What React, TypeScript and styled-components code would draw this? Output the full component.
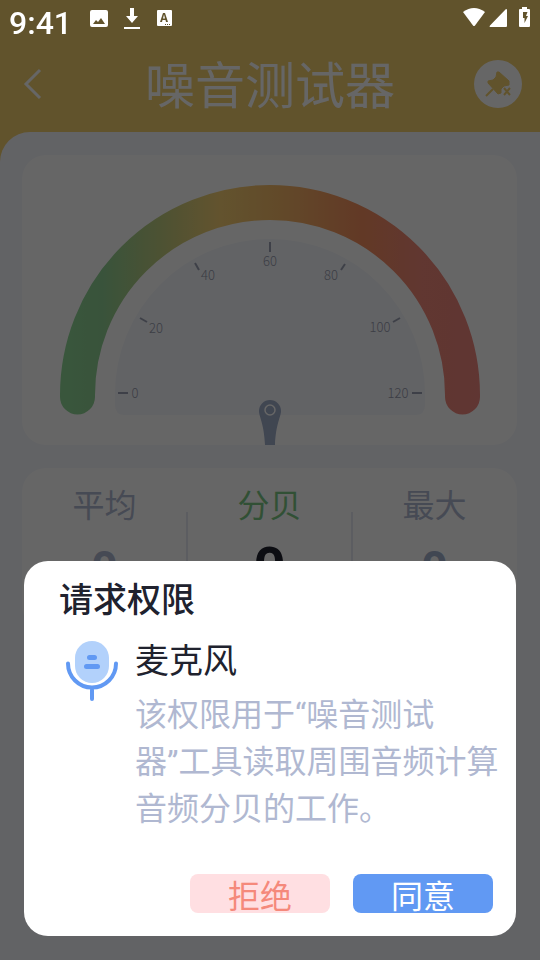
import React from "react";
import styled, { createGlobalStyle } from "styled-components";

const GlobalStyle = createGlobalStyle`
  *, *::before, *::after { box-sizing: border-box; }
  html, body, #root { height: 100%; }
  body {
    margin: 0;
    overflow: hidden;
    background: #f5f7fc;
    font-family: Roboto, "Noto Sans CJK SC", sans-serif;
  }
`;

const Screen = styled.div`
  display: flex;
  flex-direction: column;
  min-height: 100%;
  background: #f2cf6e;
`;

const StatusBar = styled.div`
  position: fixed;
  inset: 0 0 auto 0;
  z-index: 3;
  display: flex;
  align-items: flex-start;
  justify-content: space-between;
  height: 40px;
  padding: 6px 10px 0 9px;
  color: #fff;
`;

const StatusGroup = styled.div<{ $gap: number }>`
  display: flex;
  align-items: flex-start;
  gap: ${(p) => p.$gap}px;
`;

const Clock = styled.time`
  margin-right: 4px;
  font-size: 32px;
  font-weight: 500;
  line-height: 34px;
`;

const Header = styled.header`
  display: flex;
  align-items: center;
  justify-content: space-between;
  height: 132px;
  padding: 36px 18px 0;
  color: #fff;
`;

const IconButton = styled.button<{ $filled?: boolean }>`
  display: flex;
  align-items: center;
  justify-content: center;
  width: 48px;
  height: 48px;
  padding: 0;
  border: 0;
  border-radius: 50%;
  background: ${(p) => (p.$filled ? "#fff" : "transparent")};
  color: ${(p) => (p.$filled ? "#f2cf6e" : "#fff")};
`;

const BackButton = styled(IconButton)`
  justify-content: flex-start;
`;

const Title = styled.h1`
  margin: 0;
  padding-top: 6px;
  font-size: 50px;
  font-weight: 400;
  line-height: 60px;
`;

const Content = styled.main`
  display: flex;
  flex: 1;
  flex-direction: column;
  gap: 23px;
  padding: 23px 23px 0 22px;
  border-top-left-radius: 30px;
  background: #f5f7fc;
`;

const Card = styled.section`
  overflow: hidden;
  border-radius: 24px;
  background: #fff;
`;

const GaugeDrawing = styled.svg`
  display: block;
  width: 100%;
  font-family: "Noto Sans CJK SC", sans-serif;
  font-size: 13px;
  font-weight: 300;
`;

const StatsCard = styled(Card)`
  display: grid;
  grid-template-columns: repeat(3, 1fr);
  padding: 14px 0 24px;
`;

const Stat = styled.div`
  position: relative;
  display: flex;
  flex-direction: column;
  align-items: center;

  & + &::before {
    content: "";
    position: absolute;
    top: 30px;
    bottom: 0;
    left: -1px;
    width: 2px;
    background: #e6e9f2;
  }
`;

const StatLabel = styled.span<{ $color: string }>`
  font-size: 32px;
  line-height: 48px;
  color: ${(p) => p.$color};
`;

const StatValue = styled.strong<{ $color: string; $size: number }>`
  font-size: ${(p) => p.$size}px;
  font-weight: 700;
  line-height: 76px;
  color: ${(p) => p.$color};
`;

const Overlay = styled.div`
  position: fixed;
  inset: 0;
  z-index: 2;
  display: flex;
  align-items: flex-end;
  padding: 24px;
  background: rgba(0, 0, 0, 0.6);
`;

const Dialog = styled.section`
  flex: 1;
  padding: 13px 16px 23px 35px;
  border-radius: 24px;
  background: #fff;
`;

const DialogTitle = styled.h2`
  margin: 0;
  font-size: 34px;
  font-weight: 500;
  line-height: 52px;
  color: #20222e;
`;

const Permission = styled.div`
  display: flex;
  align-items: flex-start;
  gap: 17px;
  padding: 10px 0 0 7px;
`;

const MicIcon = styled.svg`
  flex: none;
  margin-top: 3px;
`;

const PermissionName = styled.h3`
  margin: 0;
  font-size: 34px;
  font-weight: 400;
  line-height: 50px;
  color: #20222e;
`;

const PermissionText = styled.p`
  margin: 6px 0 0;
  font-size: 32px;
  line-height: 47px;
  color: #b0b8d1;
`;

const Actions = styled.div`
  display: flex;
  justify-content: flex-end;
  gap: 23px;
  padding: 41px 7px 0 0;
`;

const ActionButton = styled.button<{ $primary?: boolean }>`
  display: flex;
  align-items: center;
  justify-content: center;
  width: 140px;
  height: 39px;
  padding: 6px 0 0;
  border: 0;
  border-radius: 8px;
  font-family: inherit;
  font-size: 32px;
  line-height: 40px;
  background: ${(p) => (p.$primary ? "#6199f3" : "#ffdfe2")};
  color: ${(p) => (p.$primary ? "#fff" : "#f5897b")};
`;

const ticks = [
  { label: "0", x: 113, y: 243, line: "M96 238H106" },
  { label: "20", x: 134, y: 178, line: "M118 163L125 167" },
  { label: "40", x: 186, y: 125, line: "M173 108L177 115" },
  { label: "60", x: 248, y: 111, line: "M248 87V97" },
  { label: "80", x: 309, y: 125, line: "M323 109L319 115" },
  { label: "100", x: 358, y: 177, line: "M378 163L371 167" },
  { label: "120", x: 376, y: 243, line: "M390 238H400" },
];

function Gauge() {
  return (
    <GaugeDrawing viewBox="0 0 495 290" role="img" aria-label="0 – 120">
      <defs>
        <linearGradient id="scale" gradientUnits="userSpaceOnUse" x1="38" x2="458" y1="0" y2="0">
          <stop offset="0" stopColor="#8fd897" />
          <stop offset="0.1" stopColor="#8fd094" />
          <stop offset="0.24" stopColor="#c0cd80" />
          <stop offset="0.38" stopColor="#f7d074" />
          <stop offset="0.5" stopColor="#f5bc69" />
          <stop offset="0.72" stopColor="#f58f5f" />
          <stop offset="0.86" stopColor="#f2897a" />
          <stop offset="1" stopColor="#f0877f" />
        </linearGradient>
      </defs>
      <path
        d="M55.500 242V240A192.500 192.500 0 0 1 440.500 240V242"
        fill="none"
        stroke="url(#scale)"
        strokeWidth="35"
        strokeLinecap="round"
      />
      <path d="M93 239A155 155 0 0 1 403 239V250Q403 260 393 260H103Q93 260 93 250Z" fill="#f5f7fc" />
      {ticks.map((t) => (
        <g key={t.label}>
          <path d={t.line} stroke="#9ba1b4" strokeWidth="2" />
          <text x={t.x} y={t.y} textAnchor="middle" fill="#959bae">
            {t.label}
          </text>
        </g>
      ))}
      <path d="M237 256A11 11 0 0 1 259 256C259 262 254 268 253 290H243C242 268 237 262 237 256Z" fill="#a0aecb" />
      <circle cx="248" cy="255" r="5" fill="none" stroke="#fff" strokeWidth="1.500" />
    </GaugeDrawing>
  );
}

export default function App() {
  return (
    <>
      <GlobalStyle />
      <StatusBar>
        <StatusGroup $gap={14}>
          <Clock>9:41</Clock>
          <svg width="18" height="24" viewBox="0 0 18 24" fill="currentColor" aria-hidden="true">
            <path fillRule="evenodd" d="M2 4h14q2 0 2 2v13q0 2-2 2H2q-2 0-2-2V6q0-2 2-2zM3 18h12l-4-6-3 4-2-2z" />
          </svg>
          <svg width="20" height="24" viewBox="-2 0 20 24" fill="currentColor" aria-hidden="true">
            <path d="M6 2h4v8h4l-6 7-6-7h4zM0 21h16v2H0z" />
          </svg>
          <svg width="20" height="24" viewBox="0 0 20 24" fill="currentColor" aria-hidden="true">
            <path
              fillRule="evenodd"
              d="M2 4h13q1 0 1 1v14q0 1-1 1H2q-1 0-1-1V5q0-1 1-1zM7 7l-3 9h2l.5-2h3l.5 2h2l-3-9zM7 12.500l1-4 1 4zM9 18v1h1v-1zM11 18v1h1v-1zM13 18v1h1v-1z"
            />
          </svg>
        </StatusGroup>
        <StatusGroup $gap={4}>
          <svg width="22" height="22" viewBox="0 0 22 22" fill="currentColor" aria-hidden="true">
            <path d="M0 6Q11-2 22 6L12 19.500q-1 1-2 0z" />
          </svg>
          <svg width="18" height="22" viewBox="0 0 18 22" fill="currentColor" aria-hidden="true">
            <path d="M17 3q1 0 1 1v16q0 1-1 1H1q-1-.5 0-1.500z" />
          </svg>
          <svg width="19" height="22" viewBox="1 0 19 22" fill="currentColor" aria-hidden="true">
            <path fillRule="evenodd" d="M12 1h5v2h2q1 0 1 1v16q0 1-1 1h-9q-1 0-1-1V4q0-1 1-1h2zM13 6v6h1.500v5l3.500-7h-2l1.500-4z" />
          </svg>
        </StatusGroup>
      </StatusBar>

      <Screen>
        <Header>
          <BackButton type="button" aria-label="返回">
            <svg width="30" height="32" viewBox="0 0 30 32" fill="none" stroke="currentColor" strokeWidth="3" aria-hidden="true">
              <path d="M22 2L8 16l14 14" />
            </svg>
          </BackButton>
          <Title>噪音测试器</Title>
          <IconButton type="button" $filled aria-label="取消固定">
            <svg width="48" height="48" viewBox="0 0 48 48" fill="currentColor" aria-hidden="true">
              <path
                d="M25 12L35 21V25L30 26L27 29V33L24 34L14 23V21L19 20L22 17L23 12Z"
                stroke="currentColor"
                strokeWidth="1"
                strokeLinejoin="round"
              />
              <path d="M19 29l-7 7M30 28l6 7M36 28l-6 7" fill="none" stroke="currentColor" strokeWidth="2" />
            </svg>
          </IconButton>
        </Header>
        <Content>
          <Card>
            <Gauge />
          </Card>
          <StatsCard>
            <Stat>
              <StatLabel $color="#b0b8d1">平均</StatLabel>
              <StatValue $color="#b0b8d1" $size={46}>0</StatValue>
            </Stat>
            <Stat>
              <StatLabel $color="#7cc985">分贝</StatLabel>
              <StatValue $color="#20222e" $size={56}>0</StatValue>
            </Stat>
            <Stat>
              <StatLabel $color="#b0b8d1">最大</StatLabel>
              <StatValue $color="#a3b1cc" $size={46}>0</StatValue>
            </Stat>
          </StatsCard>
        </Content>
      </Screen>

      <Overlay>
        <Dialog role="dialog" aria-modal="true" aria-labelledby="dialog-title">
          <DialogTitle id="dialog-title">请求权限</DialogTitle>
          <Permission>
            <MicIcon width="52" height="62" viewBox="0 0 52 62" fill="none" aria-hidden="true">
              <rect x="9" y="2" width="34" height="42" rx="17" fill="#b2d1fb" />
              <path d="M2 24.500A24 24 0 0 0 50 24.500M26 49V60" stroke="#6199f3" strokeWidth="4" strokeLinecap="round" />
              <path d="M23.500 18.500H28.500M20.500 27.500H31.500" stroke="#6199f3" strokeWidth="5" strokeLinecap="round" />
            </MicIcon>
            <div>
              <PermissionName>麦克风</PermissionName>
              <PermissionText>该权限用于“噪音测试器”工具读取周围音频计算音频分贝的工作。</PermissionText>
            </div>
          </Permission>
          <Actions>
            <ActionButton type="button">拒绝</ActionButton>
            <ActionButton type="button" $primary>
              同意
            </ActionButton>
          </Actions>
        </Dialog>
      </Overlay>
    </>
  );
}
